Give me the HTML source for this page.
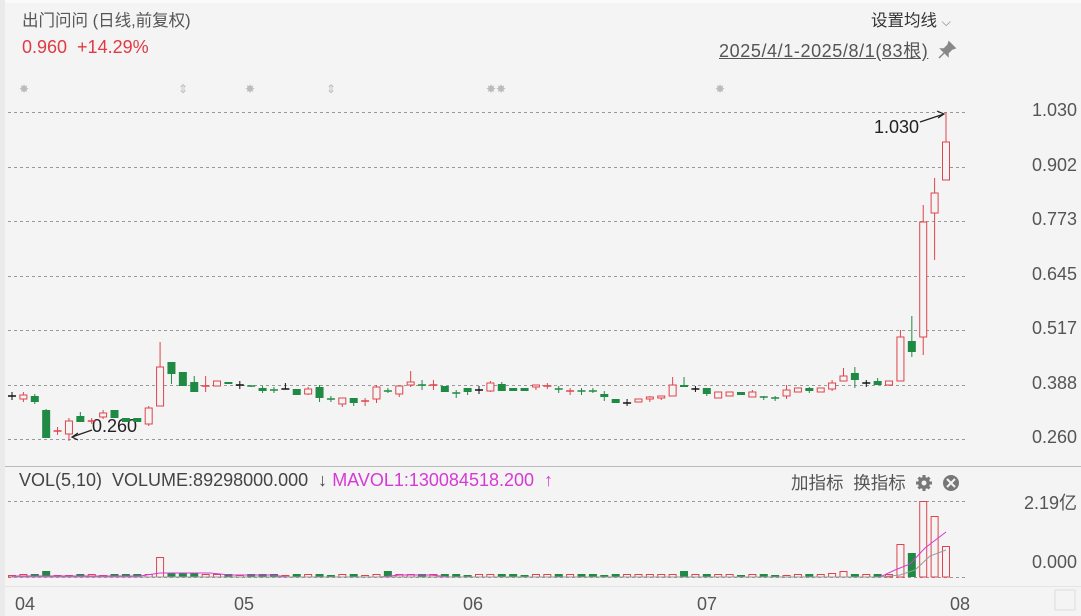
<!DOCTYPE html>
<html><head><meta charset="utf-8"><style>
body{margin:0;width:1081px;height:616px;background:#f4f4f4;font-family:"Liberation Sans","Noto Sans CJK SC",sans-serif;overflow:hidden;position:relative}
.t{position:absolute;white-space:nowrap}
.y{position:absolute;right:4px;font-size:18px;color:#555}
</style></head><body>
<div style="position:absolute;left:0;top:0;width:1081px;height:3px;background:#fafafa"></div>
<div style="position:absolute;left:0;top:0;width:5px;height:616px;background:#eaeaea"></div>
<div class="t" style="left:22px;top:7px;font-size:16.5px;color:#555">出门问问 (日线,前复权)</div>
<div class="t" style="left:22px;top:37px;font-size:18px;color:#e03a45">0.960 &nbsp;+14.29%</div>
<div class="t" style="left:871px;top:7px;font-size:16.5px;color:#333">设置均线 <span style="font-size:12px;color:#777">⌵</span></div>
<div class="t" style="left:719px;top:37px;font-size:18px;color:#555;text-decoration:underline;letter-spacing:0.6px">2025/4/1-2025/8/1(83根)</div>
<svg style="position:absolute;left:937px;top:40px" width="20" height="20"><path d="M12 2 L18 8 L15 9 L11 13 L11 16 L4 9 L7 9 L11 5 Z M7 13 L2 18" fill="#888" stroke="#888" stroke-width="1.5"/></svg>
<div class="t" style="left:19px;top:470px;font-size:18px;color:#444">VOL(5,10) &nbsp;VOLUME:89298000.000 &nbsp;↓ <span style="color:#d63ad6">MAVOL1:130084518.200 &nbsp;↑</span></div>
<div class="t" style="left:791px;top:470px;font-size:17.5px;color:#555">加指标 &nbsp;换指标</div>
<div class="y" style="top:100px">1.030</div>
<div class="y" style="top:155px">0.902</div>
<div class="y" style="top:209px">0.773</div>
<div class="y" style="top:264px">0.645</div>
<div class="y" style="top:318px">0.517</div>
<div class="y" style="top:373px">0.388</div>
<div class="y" style="top:427px">0.260</div>
<div class="y" style="top:489px">2.19亿</div>
<div class="y" style="top:552px">0.000</div>
<div class="t" style="left:15px;top:594px;font-size:18px;color:#555">04</div>
<div class="t" style="left:234px;top:594px;font-size:18px;color:#555">05</div>
<div class="t" style="left:463px;top:594px;font-size:18px;color:#555">06</div>
<div class="t" style="left:697px;top:594px;font-size:18px;color:#555">07</div>
<div class="t" style="left:950px;top:594px;font-size:18px;color:#555">08</div>
<div class="t" style="left:874px;top:117px;font-size:18px;color:#222">1.030</div>
<div class="t" style="left:92px;top:416px;font-size:18px;color:#222">0.260</div>
<svg id="s" width="1081" height="616" style="position:absolute;left:0;top:0">
<g stroke="#999" stroke-dasharray="3,3" stroke-width="1">
<line x1="8" x2="965" y1="112.5" y2="112.5"/><line x1="8" x2="965" y1="167.5" y2="167.5"/><line x1="8" x2="965" y1="221.5" y2="221.5"/><line x1="8" x2="965" y1="276.5" y2="276.5"/><line x1="8" x2="965" y1="330.5" y2="330.5"/><line x1="8" x2="965" y1="385.5" y2="385.5"/><line x1="8" x2="965" y1="439.5" y2="439.5"/><line x1="8" x2="965" y1="501.5" y2="501.5"/><line x1="8" x2="965" y1="577.5" y2="577.5"/>
</g>
<line x1="5" x2="1081" y1="466.5" y2="466.5" stroke="#bbb"/>
<line x1="5" x2="1081" y1="586.5" y2="586.5" stroke="#e4e4e4"/>
<g fill="#bbb" font-size="12"><text x="19" y="93">✸</text><text x="178" y="93">⇕</text><text x="245" y="93">✸</text><text x="326" y="93">⇕</text><text x="486" y="93">✸✸</text><text x="715" y="93">✸</text></g>
<g stroke="#222" stroke-width="1.2" fill="none"><path d="M920 122 L944 114 M937 111 L944 114 L938 118"/><path d="M92 430 L72 437 M78 433 L72 437 L78 440"/></g>
<g fill="#777"><circle cx="924" cy="483" r="6"/><circle cx="951" cy="483" r="8"/></g>
<g stroke="#777" stroke-width="3"><path d="M924 475 V491 M916 483 H932 M918.5 477.5 L929.5 488.5 M929.5 477.5 L918.5 488.5"/></g>
<circle cx="924" cy="483" r="2.5" fill="#f4f4f4"/>
<path d="M947 479 L955 487 M955 479 L947 487" stroke="#f4f4f4" stroke-width="2"/>
<rect x="1055" y="590" width="20" height="20" fill="none" stroke="#ddd"/>
<g id="c"></g>
</svg>
<script>
var R="#e0434b",G="#1e8a44",B="#111";
var d=[["b",396,396,392,400],["r",395,399,392,402],["g",396,402,394,404],["g",410,438,409,438],["r",431,431,427,435],["r",421,434,418,441],["g",416,422,412,422],["r",421,421,418,424],["r",413,417,410,419],["g",410,418,410,418],["g",418,422,418,422],["g",418,422,418,422],["r",408,424,406,426],["r",367,406,342,406],["g",362,374,362,384],["g",372,386,372,386],["g",382,392,376,392],["r",386,386,376,392],["r",381,386,381,386],["g",382,384,382,384],["b",385,385,381,389],["g",386,387,386,387],["g",388,391,386,393],["g",390,390,387,393],["b",389,389,383,389],["g",389,395,389,395],["r",389,394,387,395],["g",387,398,385,402],["g",399,399,396,402],["r",398,404,398,407],["g",398,403,398,406],["r",401,401,398,406],["r",387,399,385,403],["g",391,391,388,393],["r",386,394,386,397],["r",382,385,371,387],["g",385,385,380,390],["r",385,385,380,390],["g",386,392,386,392],["g",393,393,390,398],["g",388,392,388,395],["b",390,390,386,394],["r",383,391,381,392],["g",384,391,382,391],["g",388,391,388,391],["g",388,391,388,391],["r",385,387,385,390],["r",386,387,383,389],["g",389,390,386,393],["r",391,392,388,395],["g",391,392,388,395],["g",391,392,388,393],["g",394,397,391,401],["g",399,403,399,403],["b",403,403,399,406],["r",399,402,399,402],["r",397,399,396,402],["r",396,398,396,400],["r",385,396,377,396],["g",385,387,377,387],["b",389,389,386,392],["g",388,394,388,396],["r",392,398,392,398],["r",392,396,392,396],["g",392,395,392,395],["r",392,397,390,397],["g",397,397,396,400],["g",398,398,396,401],["r",390,396,385,399],["r",388,392,388,392],["g",388,391,387,393],["r",388,392,388,392],["r",383,389,380,391],["r",376,381,368,381],["g",373,380,367,388],["b",383,383,380,387],["g",381,385,378,385],["r",381,385,381,386],["r",337,381,330,381],["g",341,352,316,357],["r",222,337,205,355],["r",193,213,178,260],["r",142,180,112,180]];
var n=d.length,sp=(946-12)/(n-1),h="";
var vol=[2,3,3,6,2,2,3,3,2,3,3,3,3,20,4,4,4,3,3,3,2,3,3,3,2,3,3,3,2,3,3,2,3,6,3,3,3,3,3,3,2,3,3,3,3,2,3,3,3,3,3,3,2,3,3,3,3,3,3,6,3,3,3,3,2,3,3,2,2,3,3,3,4,6,3,3,3,3,33,24,76,61,31];
var off=vol.length-n;
for(var i=0;i<n;i++){var x=12+i*sp,c=d[i],col=c[0]=="r"?R:c[0]=="g"?G:B;
h+='<line x1="'+x+'" x2="'+x+'" y1="'+c[3]+'" y2="'+c[4]+'" stroke="'+col+'"/>';
var bh=Math.max(c[2]-c[1],1);
if(c[0]=="b"||bh<2)h+='<line x1="'+(x-4)+'" x2="'+(x+4)+'" y1="'+c[1]+'" y2="'+c[1]+'" stroke="'+col+'" stroke-width="1.5"/>';
else if(c[0]=="r")h+='<rect x="'+(x-3.5)+'" y="'+c[1]+'" width="7" height="'+bh+'" fill="#f4f4f4" stroke="'+R+'"/>';
else h+='<rect x="'+(x-4)+'" y="'+c[1]+'" width="8" height="'+bh+'" fill="'+G+'"/>';
var v=vol[i+off]||3;
if(c[0]=="g")h+='<rect x="'+(x-4)+'" y="'+(577-v)+'" width="8" height="'+v+'" fill="'+G+'"/>';
else h+='<rect x="'+(x-3.5)+'" y="'+(577-v+0.5)+'" width="7" height="'+(v-0.5)+'" fill="none" stroke="'+R+'"/>';}
h+='<path d="M12 576 L140 576 L160 573 L210 573 L230 575 L270 575 L290 577 L380 577 L400 575 L430 575 L450 577 L880 577 L895 570 L910 564 L925 548 L946 532" stroke="#d63ad6" fill="none"/>';
h+='<path d="M12 577 L880 577 L900 575 L915 570 L930 556 L946 550" stroke="#999" fill="none"/>';
document.getElementById("c").innerHTML=h;
</script>
</body></html>
